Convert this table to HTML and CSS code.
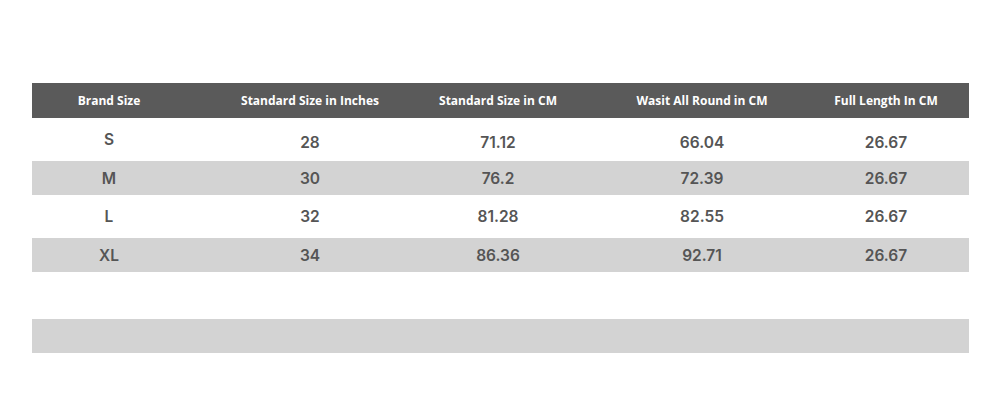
FILE: index.html
```html
<!DOCTYPE html>
<html>
<head>
<meta charset="utf-8">
<link rel="stylesheet" href="styles.css">
</head>
<body>
<div class="chart">
  <div class="row head">
    <div class="cell">Brand Size</div>
    <div class="cell">Standard Size in Inches</div>
    <div class="cell">Standard Size in CM</div>
    <div class="cell">Wasit All Round in CM</div>
    <div class="cell">Full Length In CM</div>
    <div class="cell"></div>
  </div>
  <div class="row tall first">
    <div class="cell up">S</div>
    <div class="cell">28</div>
    <div class="cell">71.12</div>
    <div class="cell">66.04</div>
    <div class="cell">26.67</div>
    <div class="cell"></div>
  </div>
  <div class="row short grey">
    <div class="cell">M</div>
    <div class="cell">30</div>
    <div class="cell">76.2</div>
    <div class="cell">72.39</div>
    <div class="cell">26.67</div>
    <div class="cell"></div>
  </div>
  <div class="row tall">
    <div class="cell">L</div>
    <div class="cell">32</div>
    <div class="cell">81.28</div>
    <div class="cell">82.55</div>
    <div class="cell">26.67</div>
    <div class="cell"></div>
  </div>
  <div class="row short grey">
    <div class="cell">XL</div>
    <div class="cell">34</div>
    <div class="cell">86.36</div>
    <div class="cell">92.71</div>
    <div class="cell">26.67</div>
    <div class="cell"></div>
  </div>
  <div class="row blank"></div>
  <div class="row short grey"></div>
</div>
</body>
</html>
```

FILE: styles.css
```css
html, body {
  margin: 0;
  padding: 0;
  background: #ffffff;
}

body {
  font-family: "Inter", "Open Sans", "Liberation Sans", sans-serif;
  color: #555555;
}

.chart {
  margin: 83px 31px 0 32px;
  display: flex;
  flex-direction: column;
}

.row {
  display: grid;
  grid-template-columns: 154px 248px 128px 280px 88px 1fr;
  align-items: center;
}

.cell {
  display: flex;
  justify-content: center;
  white-space: nowrap;
  font-weight: 600;
  font-size: 15.5px;
}

.head {
  height: 35px;
  background: #5a5a5a;
  color: #ffffff;
}

.head .cell {
  font-family: "Open Sans", "Liberation Sans", sans-serif;
  font-weight: 700;
  font-size: 12px;
}

.tall {
  height: 43px;
}

.first .cell {
  padding-top: 5px;
}

.first .cell.up {
  padding-top: 0;
}

.short {
  height: 34px;
}

.grey {
  background: #d3d3d3;
}

.blank {
  height: 47px;
}
```
